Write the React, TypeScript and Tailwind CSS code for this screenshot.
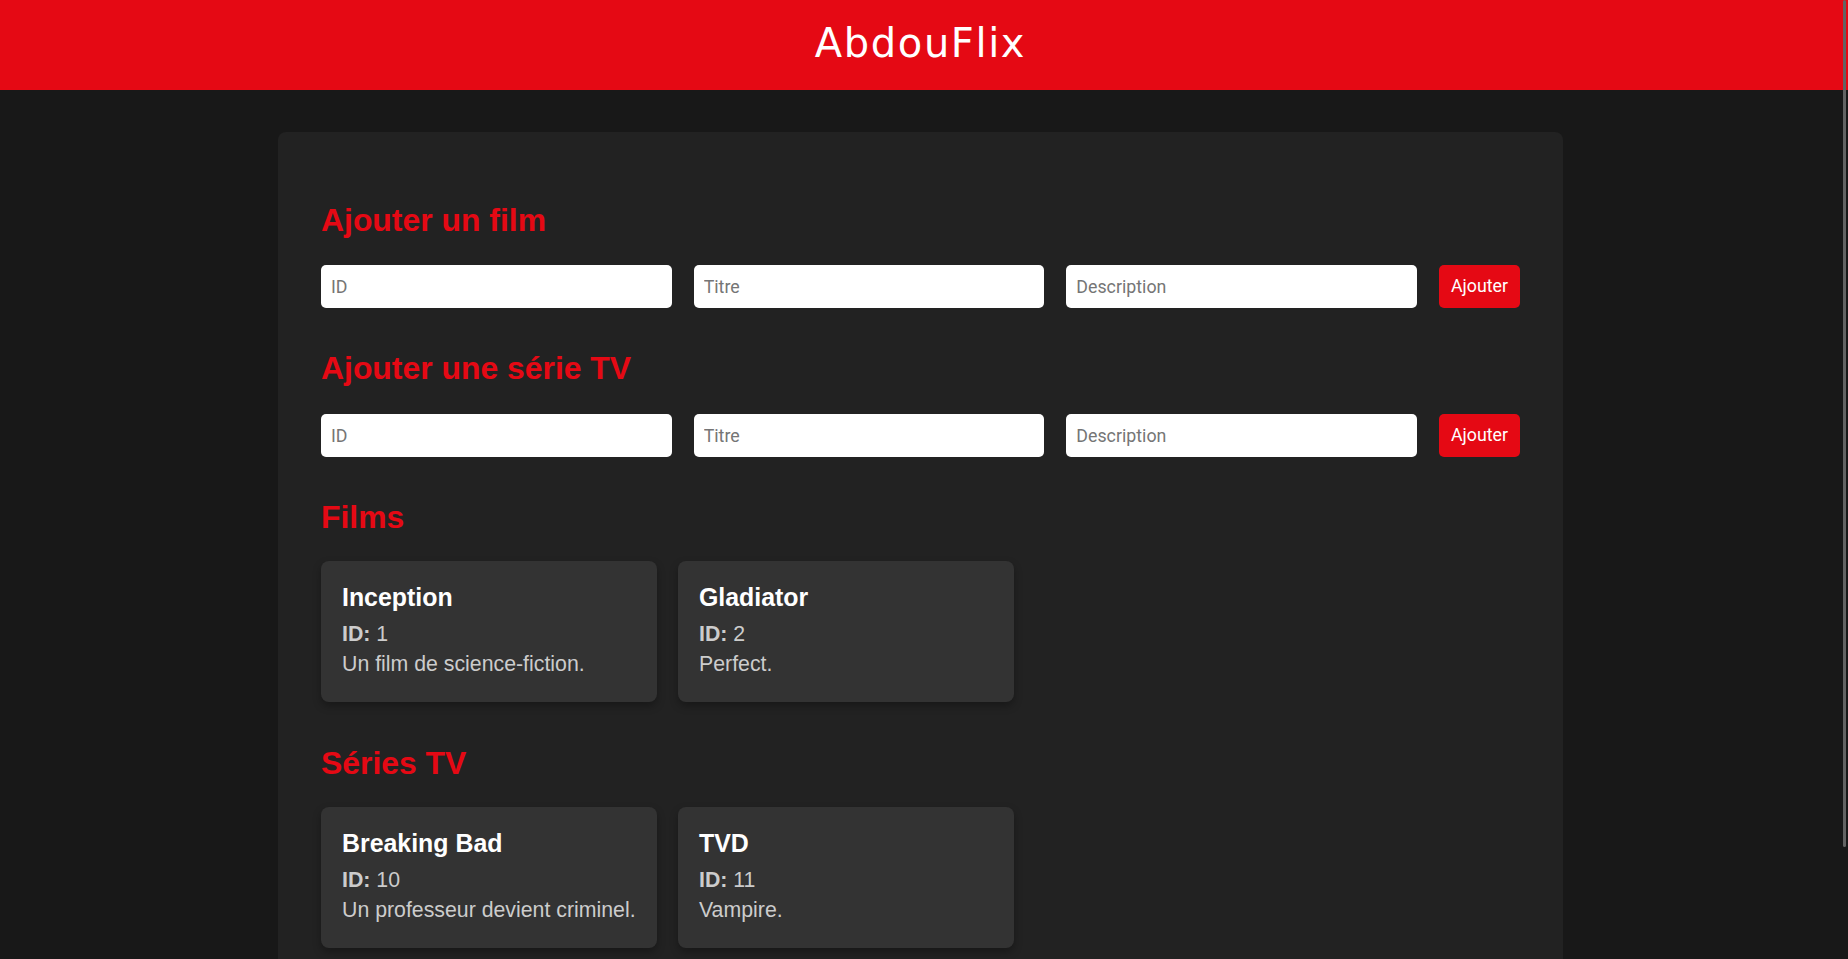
import { useState } from 'react';

interface Item {
  id: number;
  title: string;
  description: string;
}

const initialMovies: Item[] = [
  { id: 1, title: 'Inception', description: 'Un film de science-fiction.' },
  { id: 2, title: 'Gladiator', description: 'Perfect.' },
];

const initialSeries: Item[] = [
  { id: 10, title: 'Breaking Bad', description: 'Un professeur devient criminel.' },
  { id: 11, title: 'TVD', description: 'Vampire.' },
];

// Form row: three inputs + red button
function AddForm({ onAdd }: { onAdd: (item: Item) => void }) {
  const [id, setId] = useState('');
  const [title, setTitle] = useState('');
  const [description, setDescription] = useState('');

  const inputClass =
    'flex-1 min-w-0 h-[43px] rounded-[5px] bg-white px-[10px] text-[17.8px] text-black outline-none placeholder:text-[#757575] font-["Roboto",sans-serif]';

  return (
    <form
      className="flex gap-[22px] mb-[42.6px]"
      onSubmit={(e) => {
        e.preventDefault();
        if (!id || !title) return;
        onAdd({ id: Number(id), title, description });
        setId('');
        setTitle('');
        setDescription('');
      }}
    >
      <input className={inputClass} placeholder="ID" value={id} onChange={(e) => setId(e.target.value)} />
      <input className={inputClass} placeholder="Titre" value={title} onChange={(e) => setTitle(e.target.value)} />
      <input
        className={inputClass}
        placeholder="Description"
        value={description}
        onChange={(e) => setDescription(e.target.value)}
      />
      <button
        type="submit"
        className='w-[81px] h-[43px] shrink-0 rounded-[5px] bg-[#e50914] text-white text-[17.8px] font-["Roboto",sans-serif] hover:opacity-90'
      >
        Ajouter
      </button>
    </form>
  );
}

function Card({ item }: { item: Item }) {
  return (
    <div className="w-[336px] rounded-[8px] bg-[#333333] px-[21px] pt-[22px] pb-[23px] shadow-[0_4px_8px_rgba(0,0,0,0.3)]">
      <h3 className="text-[24.9px] leading-[28px] font-bold text-white">{item.title}</h3>
      <p className="mt-[9px] text-[21.3px] leading-[29px] text-[#cccccc]">
        <strong>ID:</strong> {item.id}
      </p>
      <p className="text-[21.3px] leading-[30px] text-[#cccccc]">{item.description}</p>
    </div>
  );
}

function Heading({ children, tight }: { children: React.ReactNode; tight?: boolean }) {
  return (
    <h2
      className={
        tight
          ? 'text-[31.9px] leading-[36.8px] font-bold text-[#e50914] mb-[25px]'
          : 'text-[31.9px] leading-[36.8px] font-bold text-[#e50914] mb-[26.6px]'
      }
    >
      {children}
    </h2>
  );
}

export default function App() {
  const [movies, setMovies] = useState<Item[]>(initialMovies);
  const [series, setSeries] = useState<Item[]>(initialSeries);

  return (
    <div className='relative h-screen overflow-hidden bg-[#181818] font-["Liberation_Sans",Arial,sans-serif]'>
      <header className="h-[90px] bg-[#e50914] pr-[7px] pt-[20px] text-center">
        <h1 className='text-[40px] leading-[46.6px] tracking-[1.6px] text-white font-["DejaVu_Sans",sans-serif]'>
          AbdouFlix
        </h1>
      </header>

      <div className="pr-[7px]">
        <main className="mx-auto mt-[42px] w-[1285px] rounded-[8px] bg-[#222222] px-[43px] pt-[69.5px] pb-[42px]">
          <Heading>Ajouter un film</Heading>
          <AddForm onAdd={(m) => setMovies([...movies, m])} />

          <Heading>Ajouter une série TV</Heading>
          <AddForm onAdd={(s) => setSeries([...series, s])} />

          <Heading tight>Films</Heading>
          <div className="flex flex-wrap gap-[21px] mb-[42.5px]">
            {movies.map((m) => (
              <Card key={m.id} item={m} />
            ))}
          </div>

          <Heading tight>Séries TV</Heading>
          <div className="flex flex-wrap gap-[21px]">
            {series.map((s) => (
              <Card key={s.id} item={s} />
            ))}
          </div>
        </main>
      </div>

      {/* thin overlay scrollbar thumb */}
      <div className="absolute top-0 right-[2px] w-[3px] h-[847px] rounded-full bg-[#636363]" />
    </div>
  );
}
